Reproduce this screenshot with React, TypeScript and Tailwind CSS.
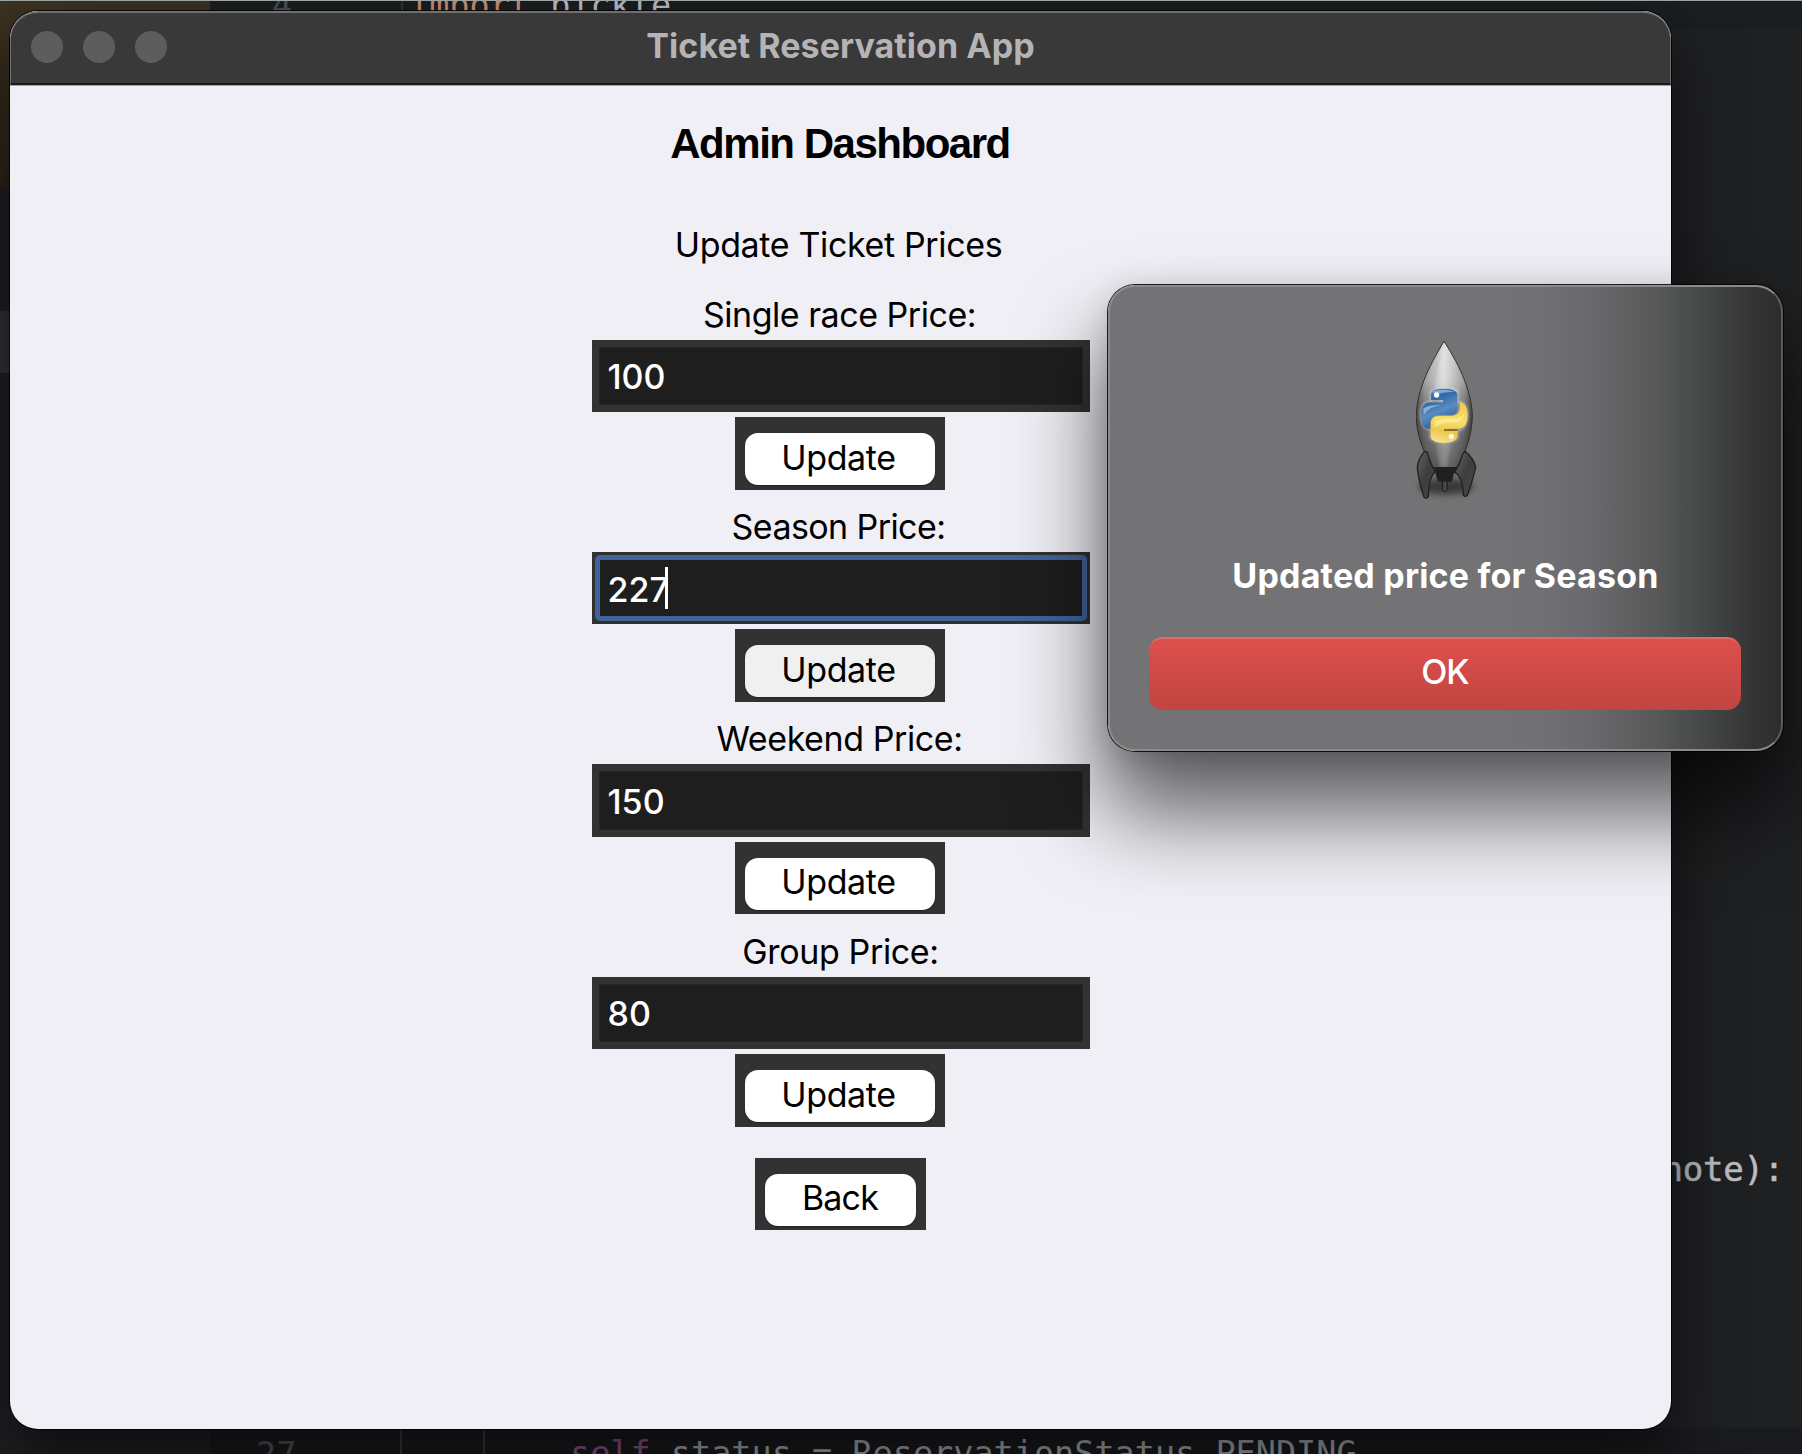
type Price = {
  label: string;
  labelClass: string;
  value: string;
  focused?: boolean;
};

const prices: Price[] = [
  { label: "Single race Price:", labelClass: "tracking-[-0.47px] pr-0.5", value: "100" },
  { label: "Season Price:", labelClass: "tracking-[-0.58px] pr-1", value: "227", focused: true },
  { label: "Weekend Price:", labelClass: "tracking-[-0.42px] pr-0.5", value: "150" },
  { label: "Group Price:", labelClass: "tracking-[-0.36px]", value: "80" },
];

function EditorBackdrop() {
  return (
    <div
      aria-hidden="true"
      className="absolute inset-0 flex flex-col overflow-hidden bg-[#1f2022] font-['DejaVu_Sans_Mono',monospace] text-[33.5px] leading-[46px] whitespace-pre"
    >
      <div className="z-10 h-px shrink-0 bg-[#9da3a3]" />
      <div className="flex h-[186px] shrink-0">
        <div className="h-full w-[210px] shrink-0 bg-linear-to-b from-[#3d3322] to-[#2c2417]" />
        <div className="flex h-[46px] flex-1 -translate-y-[18px] bg-[#1b1e20] pl-[62px]">
          <span className="w-[129px] text-[#4b5059]">4</span>
          <span className="w-[8px] border-l-2 border-[#303336]" />
          <span className="text-[#cf8e6d]">import</span>
          <span className="text-[#bcbec4]"> pickle</span>
        </div>
      </div>
      <div className="h-[124px] shrink-0" />
      <div className="h-[62px] w-[210px] shrink-0 bg-[#313335]" />
      <div className="flex h-[773px] shrink-0 items-end justify-end pr-[18px]">
        <span className="mb-[-46px] text-[34px] tracking-[-0.2px] text-[#bcbec4] [-webkit-text-stroke:0.5px_#bcbec4]">
          note):
        </span>
      </div>
      <div className="flex-1" />
      <div className="flex h-[26px] shrink-0">
        <div className="w-[210px] shrink-0" />
        <div className="flex flex-1 bg-[#1a1b1e] pl-[46px]">
          <span className="w-[144px] pt-[4px] text-[#54575d]">27</span>
          <span className="w-[83px] border-l-2 border-[#3a3c40]" />
          <span className="w-[87px] border-l-2 border-[#3a3c40]" />
          <span className="pt-[3px] text-[#94558d]">self</span>
          <span className="pt-[3px] text-[#a9abb0]">.status = ReservationStatus.PENDING</span>
        </div>
      </div>
    </div>
  );
}

function TkButton({ label, pressed, narrow }: { label: string; pressed?: boolean; narrow?: boolean }) {
  return (
    <div
      className={
        "flex h-[72.5px] shrink-0 items-start justify-center bg-[#323232] pt-4 " + (narrow ? "w-[171px]" : "w-[210px]")
      }
    >
      <button
        className={
          "flex h-[52px] items-center justify-center rounded-[13px] pb-1 shadow-[0_1px_2px_rgba(0,0,0,0.35)] " +
          (narrow ? "w-[151px] tracking-[-0.8px] " : "w-[190px] pr-0.5 tracking-[-0.35px] ") +
          (pressed ? "bg-[#f0f0f0]" : "bg-white")
        }
      >
        {label}
      </button>
    </div>
  );
}

function PriceRow({ label, labelClass, value, focused }: Price) {
  return (
    <div className="flex h-[212.3px] shrink-0 flex-col items-center">
      <div className={"h-[42px] leading-[42px] " + labelClass}>{label}</div>
      <div className={"mt-1 h-[72.5px] w-[498px] bg-[#323232] " + (focused ? "p-[3px]" : "p-[7px]")}>
        <div
          className={
            "flex h-full items-center bg-[#1e1e1e] text-white " +
            (focused ? "rounded-[5px] border-[5px] border-[#41639a] pl-2" : "border border-[#262626] pl-2")
          }
        >
          <span className="pt-0.5 font-[450]">{value}</span>
          {focused && <span className="-ml-[4px] h-[42px] w-[3px] bg-white" />}
        </div>
      </div>
      <div className="mt-[5px] pr-0.5">
        <TkButton label="Update" pressed={focused} />
      </div>
    </div>
  );
}

function RocketIcon() {
  return (
    <svg viewBox="0 0 510 570" className="h-[190px] w-[170px]" role="img" aria-label="Python launcher">
      <defs>
        <linearGradient id="hull" x1="0" x2="1" y1="0" y2="0">
          <stop offset="0" stopColor="#5d5d5d" />
          <stop offset="0.16" stopColor="#929292" />
          <stop offset="0.38" stopColor="#b4b4b4" />
          <stop offset="0.5" stopColor="#d6d6d6" />
          <stop offset="0.66" stopColor="#b8b8b8" />
          <stop offset="0.86" stopColor="#8a8a8a" />
          <stop offset="1" stopColor="#505050" />
        </linearGradient>
        <linearGradient id="shade" x1="0" x2="0" y1="0" y2="1">
          <stop offset="0" stopColor="#fff" stopOpacity="0.3" />
          <stop offset="0.32" stopColor="#fff" stopOpacity="0.15" />
          <stop offset="0.5" stopColor="#000" stopOpacity="0.12" />
          <stop offset="1" stopColor="#000" stopOpacity="0.5" />
        </linearGradient>
        <linearGradient id="fin" x1="0" x2="1" y1="0" y2="1">
          <stop offset="0" stopColor="#646464" />
          <stop offset="0.5" stopColor="#3d3d3d" />
          <stop offset="1" stopColor="#4c4c4c" />
        </linearGradient>
        <linearGradient id="blue" x1="0" x2="0.4" y1="0" y2="1">
          <stop offset="0" stopColor="#5b92cb" />
          <stop offset="0.35" stopColor="#2f68a5" />
          <stop offset="0.65" stopColor="#5a8bc0" />
          <stop offset="1" stopColor="#2e5f98" />
        </linearGradient>
        <linearGradient id="yellow" x1="0.6" x2="0.4" y1="0" y2="1">
          <stop offset="0" stopColor="#f3cb4c" />
          <stop offset="0.45" stopColor="#f6df68" />
          <stop offset="0.75" stopColor="#eec94a" />
          <stop offset="1" stopColor="#f5df8c" />
        </linearGradient>
        <filter id="soft" x="-50%" y="-50%" width="200%" height="200%">
          <feGaussianBlur stdDeviation="9" />
        </filter>
        <filter id="glow" x="-20%" y="-20%" width="140%" height="140%">
          <feGaussianBlur stdDeviation="3" />
        </filter>
      </defs>
      <ellipse cx="258" cy="500" rx="82" ry="24" fill="#000" opacity="0.5" filter="url(#soft)" />
      <path d="M248 480 H261 V510 Q254 520 248 510 Z" fill="#4a4a4a" stroke="#181818" strokeWidth="3" />
      <path d="M252 64 C218 122 169 205 169 290 C169 342 190 398 218 443 H290 C318 398 337 342 337 285 C334 205 290 122 252 64 Z" fill="url(#hull)" />
      <path d="M252 64 C218 122 169 205 169 290 C169 342 190 398 218 443 H290 C318 398 337 342 337 285 C334 205 290 122 252 64 Z" fill="url(#shade)" stroke="#303030" strokeWidth="3" />
      <path d="M250 85 C235 140 225 185 224 210 H250 Z" fill="#fff" opacity="0.22" filter="url(#glow)" />
      <path d="M228 372 H272 L260 441 H240 Z" fill="#bbb" opacity="0.25" filter="url(#glow)" />
      <path d="M194 394 Q174 416 172 442 C175 478 184 505 192 532 Q199 538 205 530 C206 502 207 474 225 456 Q210 428 202 397 Z" fill="url(#fin)" stroke="#202020" strokeWidth="4" />
      <path d="M315 394 Q342 416 347 442 C340 476 330 501 322 526 Q316 532 310 526 C309 499 305 467 284 457 Q300 430 308 402 Z" fill="url(#fin)" stroke="#202020" strokeWidth="4" />
      <path d="M222 441 H291 L281 462 L276 485 H234 L227 462 Z" fill="#202020" />
      <g strokeLinejoin="round">
        <g fill="none" stroke="#d8d8d8" strokeWidth="7" opacity="0.55" filter="url(#glow)">
          <path d="M213 215 Q250 195 292 213 V245 Q323 250 323 285 Q323 325 292 332 V355 Q250 380 212 355 V328 Q183 325 183 285 Q183 248 213 245 Z" />
        </g>
        <path d="M213 222 Q215 206 252 206 Q290 206 292 223 V268 Q290 286 270 286 H232 Q211 288 211 308 V326 H202 Q183 324 183 285 Q183 249 208 247 H249 V240 H213 Z" fill="url(#blue)" />
        <path d="M299 246 Q323 250 323 286 Q322 323 299 326 H252 V333 H292 V349 Q289 369 252 369 Q214 368 212 350 V308 Q214 289 235 288 H273 Q297 287 299 266 Z" fill="url(#yellow)" />
        <path d="M218 214 Q252 204 286 216 Q252 214 222 224 Z" fill="#9cc0e6" opacity="0.7" />
        <path d="M190 266 Q205 254 244 256 Q205 262 191 284 Z" fill="#a5c7ea" opacity="0.7" />
        <path d="M224 304 Q260 292 290 296 Q312 290 316 268 Q312 304 286 308 Q246 306 224 322 Z" fill="#fff3ae" opacity="0.6" />
        <path d="M252 328 H292 V333 H252 Z" fill="#8c6a22" />
        <circle cx="230" cy="225" r="8" fill="#fff" />
        <circle cx="274" cy="349" r="8" fill="#fffbe4" />
      </g>
    </svg>
  );
}

function AppWindow() {
  return (
    <main className="absolute top-[11px] left-[10px] flex h-[1418px] w-[1661px] flex-col overflow-hidden rounded-[28px] bg-[#f0eff5]">
      <header className="flex h-[74px] shrink-0 items-center rounded-t-[28px] border border-t-2 border-b-2 border-[#6f6f6f] border-b-[#1a1a1a] bg-[#393939] pb-0.5 pl-5">
        <div className="flex flex-1 gap-5">
          <span className="size-8 rounded-full bg-[#5d5d5d]" />
          <span className="size-8 rounded-full bg-[#5d5d5d]" />
          <span className="size-8 rounded-full bg-[#5d5d5d]" />
        </div>
        <h1 className="pb-1 font-bold tracking-[0.05px] text-[#b4b4b4]">Ticket Reservation App</h1>
        <div className="flex-1 pr-5" />
      </header>
      <section className="flex flex-1 flex-col items-center border-t border-[#a5a4a8] pt-[34px] text-black">
        <h2 className="h-12 pr-px font-['Liberation_Sans',Arial,sans-serif] text-[42px] leading-[48px] font-bold tracking-[-1.48px]">
          Admin Dashboard
        </h2>
        <p className="mt-[56px] h-[42px] pr-1 leading-[42px] tracking-[-0.36px]">Update Ticket Prices</p>
        <div className="mt-[27.7px] flex flex-col">
          {prices.map((p) => (
            <PriceRow key={p.label} {...p} />
          ))}
        </div>
        <div className="mt-[14.8px] pr-px">
          <TkButton label="Back" narrow />
        </div>
      </section>
    </main>
  );
}

function UpdateDialog() {
  return (
    <div
      role="dialog"
      className="absolute top-[285px] left-[1108px] flex h-[466px] w-[675px] flex-col items-center rounded-[27px] border-2 border-[#8a8a8c] border-r-[#5c5c5d] bg-[linear-gradient(to_right,#737375_0%,#737375_55%,#717073_64%,#69686d_72%,#606062_77%,#565757_82%,#494b4c_87%,#3d3e3e_92%,#343435_96%,#2d2d2e_100%)] pt-[33px] text-white shadow-[0_0_0_1px_rgba(0,0,0,0.85),0_58px_86px_6px_rgba(0,0,0,0.6),0_6px_30px_rgba(0,0,0,0.16)]"
    >
      <div className="flex pr-px">
        <RocketIcon />
      </div>
      <p className="mt-[45px] h-[42px] leading-[42px] font-bold tracking-[0.2px]">Updated price for Season</p>
      <button className="mt-[40px] mr-px flex h-[73px] w-[592px] items-center justify-center rounded-[14px] border-t-2 border-[#df6a67] bg-linear-to-b from-[#dd4f4c] to-[#c04542] pb-1.5 font-medium tracking-[-1px]">
        OK
      </button>
    </div>
  );
}

export default function App() {
  return (
    <div className="relative h-[1454px] w-[1802px] overflow-hidden bg-[#1f2022] font-['Inter',sans-serif] text-[34px]">
      <EditorBackdrop />
      <div className="absolute top-[11px] left-[10px] h-[1418px] w-[1661px] rounded-[28px] shadow-[0_0_0_1px_rgba(0,0,0,0.8),0_30px_70px_rgba(0,0,0,0.62)]" />
      <AppWindow />
      <UpdateDialog />
    </div>
  );
}
